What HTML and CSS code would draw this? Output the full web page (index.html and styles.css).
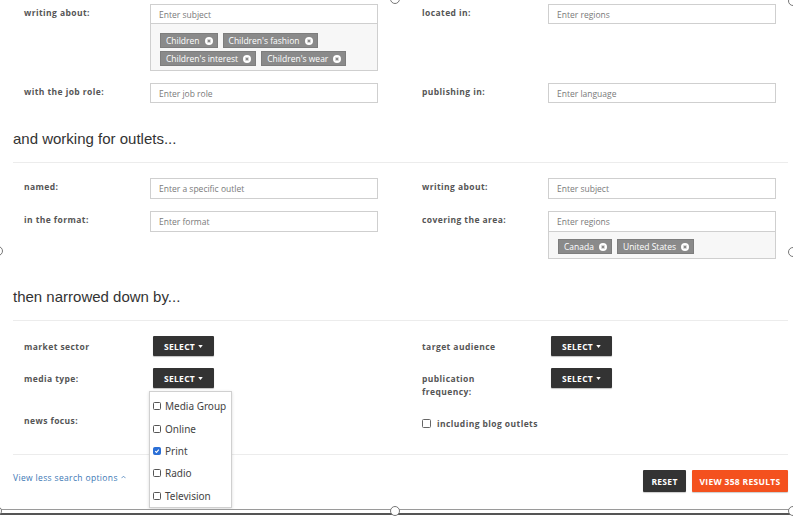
FILE: index.html
```html
<!DOCTYPE html>
<html>
<head>
<meta charset="utf-8">
<link rel="stylesheet" href="styles.css">
</head>
<body>
<div class="shot">
  <section class="grid g1">
    <div class="cell">
      <span class="lbl">writing about:</span>
      <div class="field">
        <div class="input">Enter subject</div>
        <div class="tags">
          <span class="tag">Children <svg class="x" viewBox="0 0 8 8"><circle cx="4" cy="4" r="4"/><path d="M2.6 2.6 5.4 5.4M5.4 2.6 2.6 5.4"/></svg></span>
          <span class="tag">Children's fashion <svg class="x" viewBox="0 0 8 8"><circle cx="4" cy="4" r="4"/><path d="M2.6 2.6 5.4 5.4M5.4 2.6 2.6 5.4"/></svg></span>
          <span class="tag">Children's interest <svg class="x" viewBox="0 0 8 8"><circle cx="4" cy="4" r="4"/><path d="M2.6 2.6 5.4 5.4M5.4 2.6 2.6 5.4"/></svg></span>
          <span class="tag">Children's wear <svg class="x" viewBox="0 0 8 8"><circle cx="4" cy="4" r="4"/><path d="M2.6 2.6 5.4 5.4M5.4 2.6 2.6 5.4"/></svg></span>
        </div>
      </div>
    </div>
    <div class="cell">
      <span class="lbl">located in:</span>
      <div class="field"><div class="input">Enter regions</div></div>
    </div>
    <div class="cell">
      <span class="lbl">with the job role:</span>
      <div class="field"><div class="input">Enter job role</div></div>
    </div>
    <div class="cell">
      <span class="lbl">publishing in:</span>
      <div class="field"><div class="input">Enter language</div></div>
    </div>
  </section>

  <h2 class="heading h1">and working for outlets...</h2>
  <hr class="rule">

  <section class="grid g2">
    <div class="cell">
      <span class="lbl">named:</span>
      <div class="field"><div class="input">Enter a specific outlet</div></div>
    </div>
    <div class="cell">
      <span class="lbl">writing about:</span>
      <div class="field"><div class="input">Enter subject</div></div>
    </div>
    <div class="cell">
      <span class="lbl">in the format:</span>
      <div class="field"><div class="input">Enter format</div></div>
    </div>
    <div class="cell">
      <span class="lbl">covering the area:</span>
      <div class="field">
        <div class="input">Enter regions</div>
        <div class="tags tags-sm">
          <span class="tag">Canada <svg class="x" viewBox="0 0 8 8"><circle cx="4" cy="4" r="4"/><path d="M2.6 2.6 5.4 5.4M5.4 2.6 2.6 5.4"/></svg></span>
          <span class="tag">United States <svg class="x" viewBox="0 0 8 8"><circle cx="4" cy="4" r="4"/><path d="M2.6 2.6 5.4 5.4M5.4 2.6 2.6 5.4"/></svg></span>
        </div>
      </div>
    </div>
  </section>

  <h2 class="heading h2">then narrowed down by...</h2>
  <hr class="rule">

  <section class="grid g3">
    <div class="cell">
      <span class="lbl lbl-btn">market sector</span>
      <div class="field"><button class="select">SELECT <svg class="caret" viewBox="0 0 6 4"><path d="M0 0h6L3 4z"/></svg></button></div>
    </div>
    <div class="cell">
      <span class="lbl lbl-btn">target audience</span>
      <div class="field"><button class="select">SELECT <svg class="caret" viewBox="0 0 6 4"><path d="M0 0h6L3 4z"/></svg></button></div>
    </div>
    <div class="cell">
      <span class="lbl lbl-btn">media type:</span>
      <div class="field menu-anchor">
        <button class="select">SELECT <svg class="caret" viewBox="0 0 6 4"><path d="M0 0h6L3 4z"/></svg></button>
        <ul class="menu">
          <li><span class="cb"></span>Media Group</li>
          <li><span class="cb"></span>Online</li>
          <li><span class="cb on"><svg viewBox="0 0 8 8"><path d="M1.6 4.2 3.3 5.8 6.4 2.2"/></svg></span>Print</li>
          <li><span class="cb"></span>Radio</li>
          <li><span class="cb"></span>Television</li>
        </ul>
      </div>
    </div>
    <div class="cell">
      <span class="lbl lbl-btn">publication frequency:</span>
      <div class="field"><button class="select">SELECT <svg class="caret" viewBox="0 0 6 4"><path d="M0 0h6L3 4z"/></svg></button></div>
    </div>
    <div class="cell">
      <span class="lbl lbl-btn">news focus:</span>
    </div>
    <div class="cell blog">
      <span class="cb"></span><span class="blog-text">including blog outlets</span>
    </div>
  </section>

  <hr class="rule r3">

  <footer class="footer">
    <a class="less">View less search options <svg class="chev" viewBox="0 0 6 4"><path d="M0.6 3.4 3 1 5.4 3.4"/></svg></a>
    <div class="actions">
      <button class="btn dark">RESET</button>
      <button class="btn orange">VIEW 358 RESULTS</button>
    </div>
  </footer>
</div>
<div class="frame-bottom"><div class="frame-line"></div></div>

<span class="handle" style="left:390px;top:-6px"></span>
<span class="handle" style="left:788px;top:-4px"></span>
<span class="handle" style="left:-7px;top:246px"></span>
<span class="handle" style="left:788px;top:247px"></span>
<span class="handle" style="left:-8px;top:506px"></span>
<span class="handle" style="left:390px;top:506px"></span>
<span class="handle" style="left:788px;top:506px"></span>
</body>
</html>
```

FILE: styles.css
```css
html, body {
  margin: 0;
  padding: 0;
}
body {
  width: 793px;
  height: 516px;
  overflow: hidden;
  position: relative;
  background: #fff;
  font-family: "Open Sans", "Noto Sans", sans-serif;
  color: #444;
}
.shot {
  height: 509px;
  overflow: hidden;
  position: relative;
}
.grid {
  display: grid;
  grid-template-columns: 354px 354px;
  column-gap: 44px;
  row-gap: 12px;
  padding-left: 24px;
  align-items: start;
}
.g1 { padding-top: 4px; }
.g1 .input { height: 20px; }
.g2 { padding-top: 15px; }
.g3 { padding-top: 15px; }
.cell {
  display: flex;
  align-items: flex-start;
}
.lbl {
  width: 126px;
  flex: none;
  font-weight: 700;
  font-size: 8.5px;
  line-height: 13px;
  padding-top: 1.5px;
  letter-spacing: 0.42px;
  color: #555;
}
.lbl-btn {
  padding-top: 4px;
  width: 90px;
  margin-right: 36px;
}
.field {
  flex: 1;
}
.input {
  height: 21px;
  box-sizing: border-box;
  border: 1px solid #cfcfcf;
  padding: 0 8px;
  font-size: 8.5px;
  color: #7a7a7a;
  display: flex;
  align-items: center;
  background: #fff;
}
.tags {
  border: 1px solid #cfcfcf;
  border-top: none;
  background: #f7f7f7;
  padding: 9px 9px 4px;
  display: flex;
  flex-wrap: wrap;
  gap: 3px 5px;
}
.tags-sm {
  padding: 7px 9px 4px;
}
.tag {
  background: #8a8a8a;
  color: #fff;
  font-size: 8.5px;
  height: 15px;
  box-sizing: border-box;
  border: 1px solid #7d7d7d;
  padding: 0 4px 0 5px;
  display: inline-flex;
  align-items: center;
  gap: 5px;
  white-space: nowrap;
}
.x {
  width: 8px;
  height: 8px;
}
.x circle { fill: #fff; }
.x path {
  stroke: #888;
  stroke-width: 1.3;
  fill: none;
}
.heading {
  font-family: "Liberation Sans", Arial, sans-serif;
  font-weight: normal;
  font-size: 15px;
  line-height: 18px;
  color: #333;
  margin: 0;
  padding-left: 13px;
}
.h1 { margin-top: 27px; margin-bottom: 14px; }
.h2 { margin-top: 29px; margin-bottom: 14px; }
.rule {
  border: none;
  border-top: 1px solid #ececec;
  margin: 0 5px 0 13px;
  height: 0;
}
.r3 { margin-top: 25px; }
.select {
  margin-left: 3px;
  width: 61px;
  height: 20px;
  border: none;
  border-radius: 1px;
  background: #333;
  color: #fff;
  font-family: "Open Sans", sans-serif;
  font-weight: 700;
  font-size: 8.5px;
  letter-spacing: 0.3px;
  display: flex;
  align-items: center;
  justify-content: center;
  gap: 3px;
  padding: 0;
  box-shadow: 0 1px 1px rgba(0,0,0,0.25);
}
.caret {
  width: 5px;
  height: 3px;
  fill: #fff;
}
.menu-anchor {
  position: relative;
}
.menu {
  position: absolute;
  left: -1px;
  top: 23px;
  width: 81px;
  margin: 0;
  padding: 3px 0 0;
  list-style: none;
  background: #fff;
  border: 1px solid #d0d0d0;
  box-shadow: 0 1px 3px rgba(0,0,0,0.15);
  z-index: 2;
}
.menu li {
  height: 22.4px;
  display: flex;
  align-items: center;
  gap: 4px;
  padding-left: 3px;
  font-family: "Noto Sans", "Open Sans", sans-serif;
  font-size: 10px;
  color: #444;
  white-space: nowrap;
}
.cb {
  width: 8px;
  height: 8px;
  box-sizing: border-box;
  border: 1px solid #555;
  border-radius: 1.5px;
  background: #fff;
  flex: none;
  display: inline-flex;
}
.cb.on {
  background: #2b6fd6;
  border-color: #2b6fd6;
}
.cb svg {
  width: 6px;
  height: 6px;
}
.cb svg path {
  fill: none;
  stroke: #fff;
  stroke-width: 1.5;
}
.blog {
  align-items: center;
  gap: 6px;
  padding-top: 8px;
}
.blog .cb {
  width: 9px;
  height: 9px;
  border-color: #666;
}
.blog-text {
  font-weight: 700;
  font-size: 8.5px;
  letter-spacing: 0.42px;
  color: #555;
}
.footer {
  display: flex;
  justify-content: space-between;
  align-items: flex-start;
  padding: 15px 5px 0 13px;
}
.less {
  font-size: 8.5px;
  line-height: 13px;
  margin-top: 0.5px;
  color: #3c78b5;
  letter-spacing: 0.35px;
  display: flex;
  align-items: center;
  gap: 3px;
}
.chev {
  width: 5px;
  height: 4px;
}
.chev path {
  fill: none;
  stroke: #3c78b5;
  stroke-width: 0.9;
}
.actions {
  display: flex;
  gap: 6px;
}
.btn {
  height: 22px;
  border: none;
  border-radius: 1px;
  color: #fff;
  font-family: "Open Sans", sans-serif;
  font-weight: 700;
  font-size: 8.5px;
  letter-spacing: 0.3px;
  padding: 0;
  box-shadow: 0 1px 1px rgba(0,0,0,0.2);
}
.dark {
  background: #333;
  width: 43px;
}
.orange {
  background: #f4511e;
  width: 96px;
}
.frame-bottom {
  height: 7px;
  box-sizing: border-box;
  border-top: 1px solid #9a9a9a;
  padding-top: 3px;
}
.frame-line {
  height: 2px;
  background: #555;
}
.handle {
  position: absolute;
  width: 8px;
  height: 8px;
  border: 1px solid #777;
  border-radius: 50%;
  background: #fff;
  z-index: 5;
}
```
